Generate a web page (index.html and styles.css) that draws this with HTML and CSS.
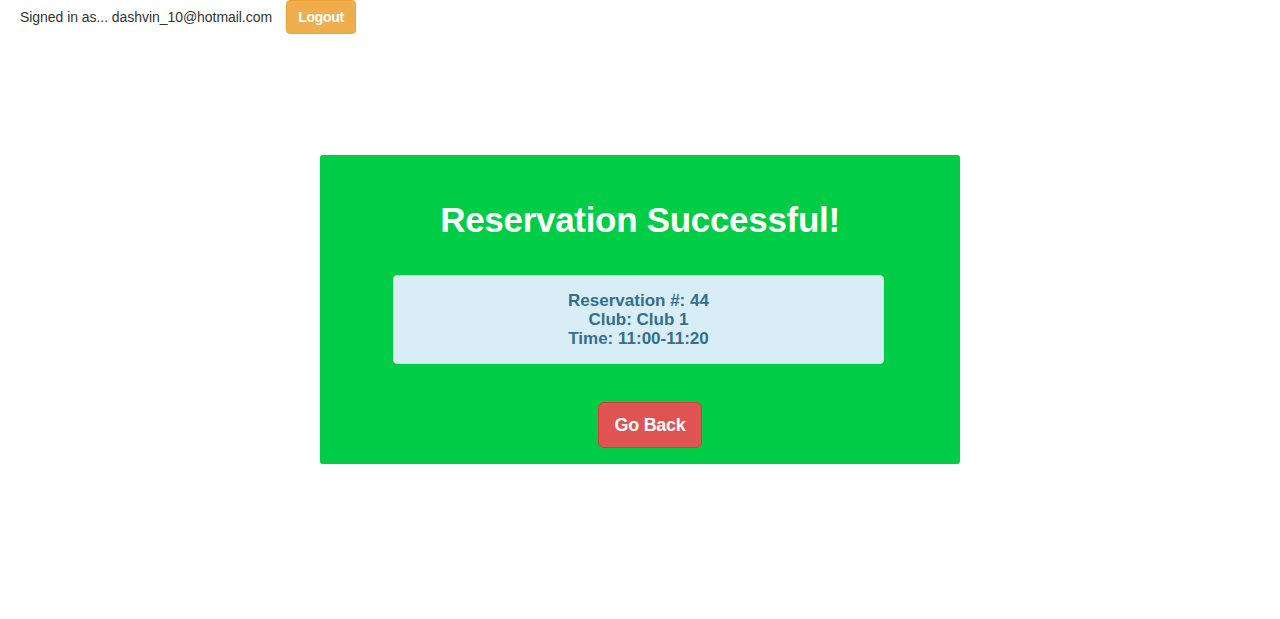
FILE: index.html
```html
<!DOCTYPE html>
<html>
<head>
<meta charset="utf-8">
<link rel="stylesheet" href="styles.css">
</head>
<body>
<header class="topbar">
  <span class="signed">Signed in as... dashvin_10@hotmail.com</span>
  <button class="btn btn-warning">Logout</button>
</header>
<main class="page">
  <section class="panel">
    <h1 class="title">Reservation Successful!</h1>
    <div class="alert-info">
      <div>Reservation #: 44</div>
      <div>Club: Club 1</div>
      <div>Time: 11:00-11:20</div>
    </div>
    <div class="actions">
      <button class="btn btn-danger btn-lg">Go Back</button>
    </div>
  </section>
</main>
</body>
</html>
```

FILE: styles.css
```css
* { box-sizing: border-box; }
html, body { margin: 0; padding: 0; background: #fff; }
body {
  font-family: "Liberation Sans", Arial, sans-serif;
  color: #333;
  font-size: 14px;
}
.topbar {
  display: flex;
  align-items: center;
  gap: 14px;
  padding-left: 20px;
  height: 34px;
}
.signed {
  font-size: 14px;
  color: #333;
  letter-spacing: -0.05px;
  padding-bottom: 1px;
}
.btn {
  font-family: "Liberation Sans", Arial, sans-serif;
  border: 1px solid transparent;
  border-radius: 4px;
  color: #fff;
  cursor: pointer;
}
.btn-warning {
  background: #f0ad4e;
  border-color: #eea236;
  font-size: 14px;
  font-weight: bold;
  padding: 0;
  width: 70px;
  height: 34px;
  line-height: 32px;
  align-self: flex-start;
  letter-spacing: -0.3px;
}
.page {
  display: flex;
  justify-content: center;
  padding-top: 121px;
}
.panel {
  width: 640px;
  height: 309px;
  background: #00cd45;
  border-radius: 3px;
  display: flex;
  flex-direction: column;
  align-items: center;
  padding-top: 43px;
}
.title {
  margin: 0;
  color: #fff;
  font-size: 35px;
  font-weight: bold;
  line-height: 43px;
  letter-spacing: -0.3px;
}
.alert-info {
  margin-top: 34px;
  width: 491px;
  margin-right: 3px;
  background: #d9edf7;
  border: 1px solid #bce8f1;
  border-radius: 4px;
  color: #31708f;
  font-size: 17px;
  font-weight: bold;
  line-height: 19px;
  text-align: center;
  padding: 15px 15px 15px;
}
.actions {
  margin-top: 38px;
  padding-left: 20px;
}
.btn-danger {
  background: #df5452;
  border-color: #d43f3a;
}
.btn-lg {
  font-size: 18px;
  font-weight: bold;
  line-height: 24px;
  padding: 10px 0;
  border-radius: 6px;
  width: 104px;
  height: 46px;
  letter-spacing: -0.3px;
}
```
